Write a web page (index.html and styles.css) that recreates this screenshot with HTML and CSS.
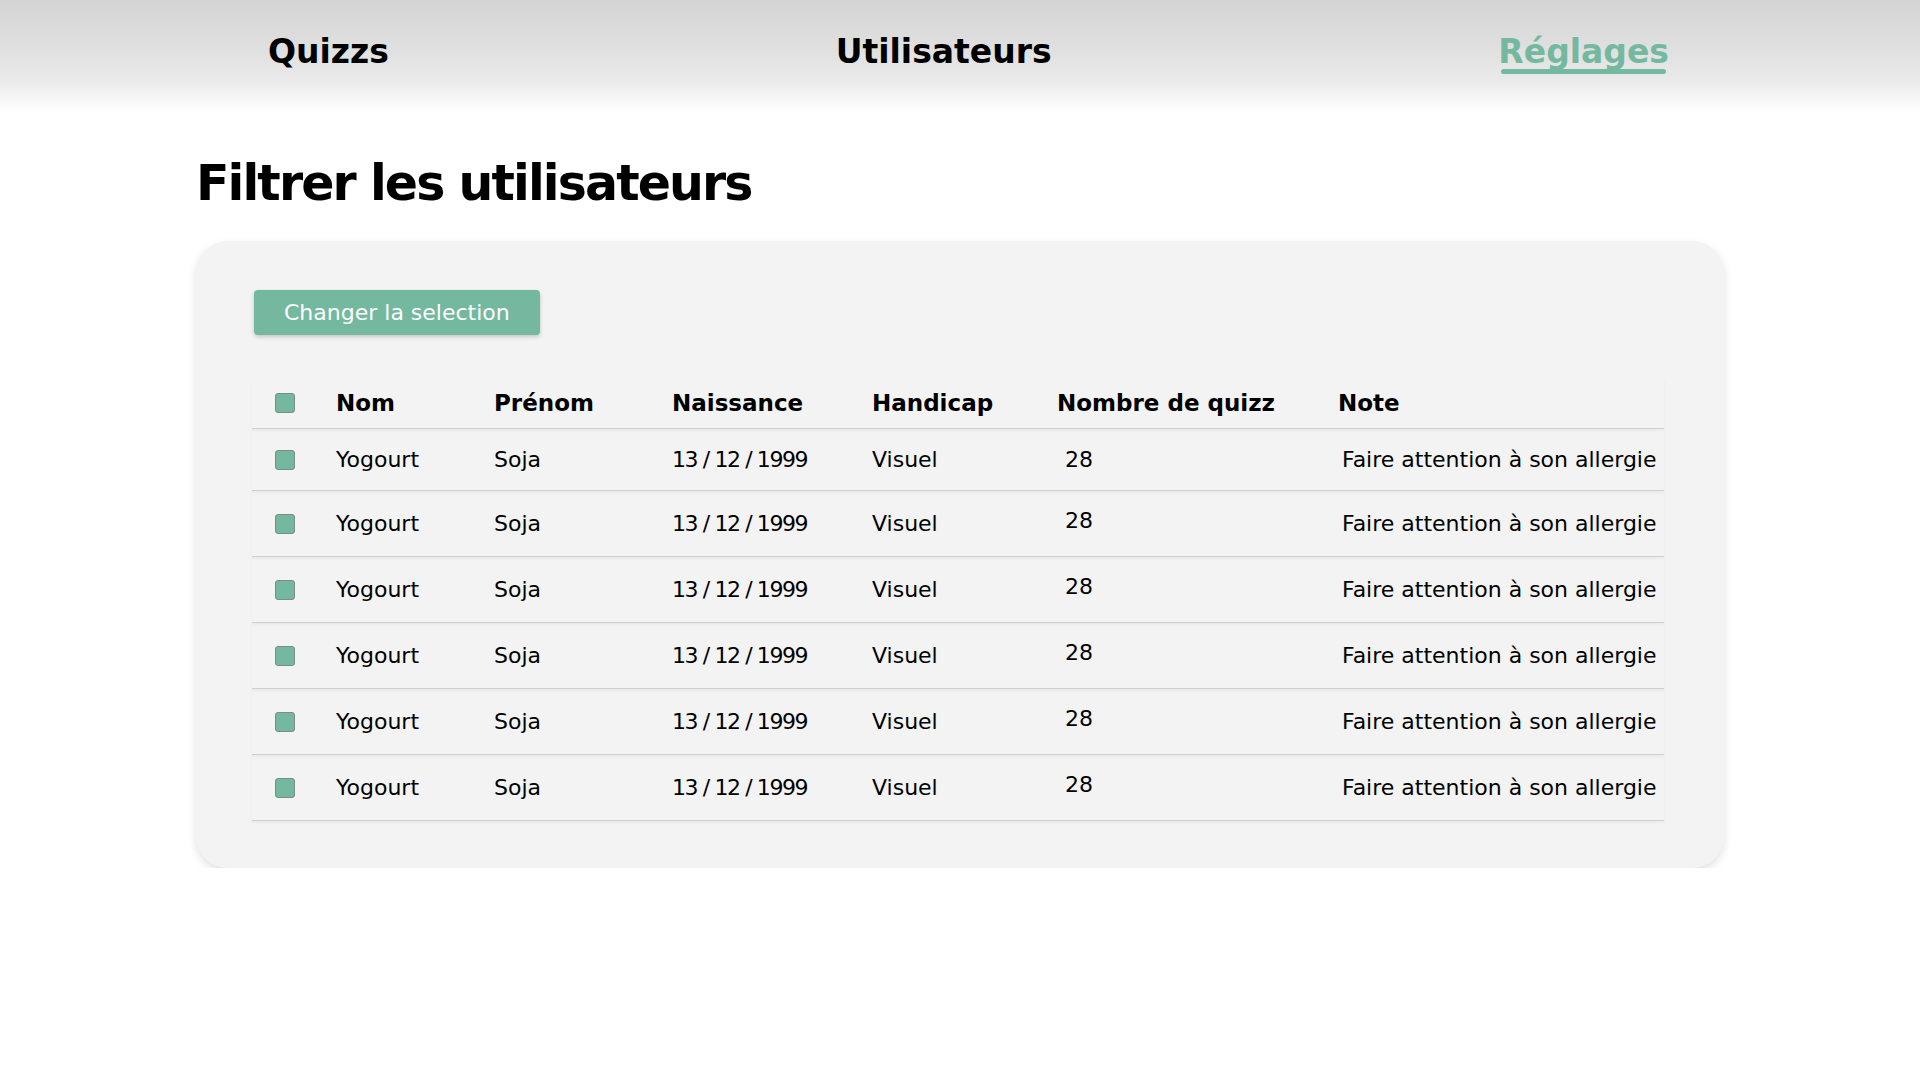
FILE: index.html
```html
<!DOCTYPE html>
<html lang="fr">
<head>
<meta charset="utf-8">
<title>Filtrer les utilisateurs</title>
<link rel="stylesheet" href="styles.css">
</head>
<body>
<header class="topbar">
  <nav class="nav">
    <a class="nav-link" href="#">Quizzs</a>
    <a class="nav-link" href="#">Utilisateurs</a>
    <a class="nav-link active" href="#">Réglages</a>
  </nav>
</header>
<main class="page">
  <h1 class="title">Filtrer les utilisateurs</h1>
  <section class="card">
    <button class="btn" type="button">Changer la selection</button>
    <div class="table">
      <div class="row head">
        <span class="cell"><span class="check"></span></span>
        <span class="cell">Nom</span>
        <span class="cell">Prénom</span>
        <span class="cell">Naissance</span>
        <span class="cell">Handicap</span>
        <span class="cell">Nombre de quizz</span>
        <span class="cell">Note</span>
      </div>
      <div class="row first">
        <span class="cell"><span class="check"></span></span>
        <span class="cell">Yogourt</span>
        <span class="cell">Soja</span>
        <span class="cell date">13 / 12 / 1999</span>
        <span class="cell">Visuel</span>
        <span class="cell num">28</span>
        <span class="cell note">Faire attention à son allergie</span>
      </div>
      <div class="row">
        <span class="cell"><span class="check"></span></span>
        <span class="cell">Yogourt</span>
        <span class="cell">Soja</span>
        <span class="cell date">13 / 12 / 1999</span>
        <span class="cell">Visuel</span>
        <span class="cell num up">28</span>
        <span class="cell note">Faire attention à son allergie</span>
      </div>
      <div class="row">
        <span class="cell"><span class="check"></span></span>
        <span class="cell">Yogourt</span>
        <span class="cell">Soja</span>
        <span class="cell date">13 / 12 / 1999</span>
        <span class="cell">Visuel</span>
        <span class="cell num up">28</span>
        <span class="cell note">Faire attention à son allergie</span>
      </div>
      <div class="row">
        <span class="cell"><span class="check"></span></span>
        <span class="cell">Yogourt</span>
        <span class="cell">Soja</span>
        <span class="cell date">13 / 12 / 1999</span>
        <span class="cell">Visuel</span>
        <span class="cell num up">28</span>
        <span class="cell note">Faire attention à son allergie</span>
      </div>
      <div class="row">
        <span class="cell"><span class="check"></span></span>
        <span class="cell">Yogourt</span>
        <span class="cell">Soja</span>
        <span class="cell date">13 / 12 / 1999</span>
        <span class="cell">Visuel</span>
        <span class="cell num up">28</span>
        <span class="cell note">Faire attention à son allergie</span>
      </div>
      <div class="row">
        <span class="cell"><span class="check"></span></span>
        <span class="cell">Yogourt</span>
        <span class="cell">Soja</span>
        <span class="cell date">13 / 12 / 1999</span>
        <span class="cell">Visuel</span>
        <span class="cell num up">28</span>
        <span class="cell note">Faire attention à son allergie</span>
      </div>
    </div>
  </section>
</main>
</body>
</html>
```
FILE: styles.css
```css
* { box-sizing: border-box; }

html, body {
  margin: 0;
  padding: 0;
  background: #ffffff;
  color: #000000;
  font-family: "DejaVu Sans", "Open Sans", sans-serif;
}

.topbar {
  height: 112px;
  background: linear-gradient(180deg, #d4d4d4 0%, #e0e0e0 45%, #eaeaea 72%, #ffffff 100%);
}

.nav {
  display: flex;
  justify-content: space-between;
  align-items: flex-start;
  padding: 32px 251px 0 268px;
}

.nav-link {
  display: inline-block;
  font-size: 33px;
  font-weight: 700;
  line-height: 40px;
  color: #000000;
  text-decoration: none;
}

.nav-link.active {
  color: #74b8a0;
}

.nav-link.active::after {
  content: "";
  display: block;
  height: 5px;
  margin: -3px 3px 0 3px;
  border-radius: 3px;
  background: #74b8a0;
}

.page {
  padding: 0 196px;
}

.title {
  margin: 42px 0 27px 0;
  font-size: 49px;
  line-height: 60px;
  font-weight: 700;
  letter-spacing: -1.9px;
}

.card {
  background: #f3f3f3;
  border-radius: 32px;
  box-shadow: 0 4px 10px rgba(0, 0, 0, 0.12);
  padding: 49px 60px 47px 56px;
}

.btn {
  display: block;
  height: 45px;
  margin-left: 2px;
  padding: 0 30px;
  border: none;
  border-radius: 4px;
  background: #74b8a0;
  color: #ffffff;
  font-family: inherit;
  font-size: 22px;
  box-shadow: 0 2px 4px rgba(0, 0, 0, 0.18);
}

.table {
  margin-top: 43px;
}

.row {
  display: grid;
  grid-template-columns: 84px 158px 178px 200px 185px 281px 326px;
  align-items: center;
  height: 66px;
  border-bottom: 1px solid #cfcfcf;
  box-shadow: 0 2px 3px rgba(0, 0, 0, 0.04);
  font-size: 22px;
  white-space: nowrap;
}

.row.head {
  height: 51px;
  font-size: 23px;
  font-weight: 700;
}

.row.first {
  height: 62px;
}

.check {
  display: block;
  width: 20px;
  height: 20px;
  margin-left: 23px;
  border: 1px solid #7b8b85;
  border-radius: 3px;
  background: #74b8a0;
}

.date {
  letter-spacing: -1.4px;
}

.num {
  padding-left: 8px;
}

.num.up {
  margin-top: -6px;
}

.note {
  padding-left: 4px;
}
```
